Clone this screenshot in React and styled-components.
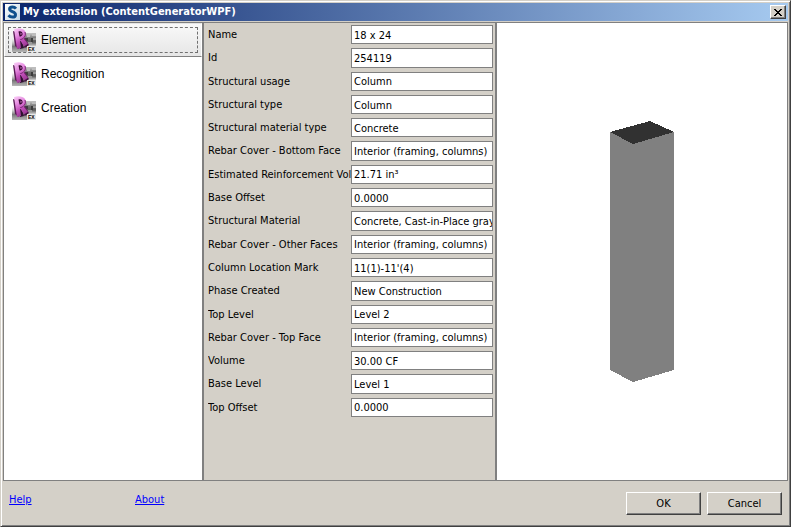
import React, { useState } from "react";
import styled, { createGlobalStyle } from "styled-components";

const GlobalStyle = createGlobalStyle`
    * {
        box-sizing: border-box;
    }

    body {
        margin: 0;
        background: #d4d0c8;
        color: #000;
        font-family: "DejaVu Sans Condensed", "DejaVu Sans", Tahoma, sans-serif;
        font-size: 11px;
        line-height: 14px;
    }

    button,
    input {
        font: inherit;
        color: inherit;
    }
`;

const Window = styled.div`
    display: flex;
    flex-direction: column;
    min-height: 100vh;
    padding: 2px 2px 1px 2px;
    border: 1px solid;
    border-color: #d4d0c8 #404040 #404040 #d4d0c8;
    background: #d4d0c8;
    box-shadow: inset 1px 1px #fff, inset -1px -1px #808080;
`;

const TitleBar = styled.header`
    display: flex;
    align-items: center;
    gap: 3px;
    height: 18px;
    margin-bottom: 1px;
    padding: 0 2px;
    background: linear-gradient(to right, #0a246a, #a6caf0);
`;

const Title = styled.h1`
    flex: 1;
    margin: 0;
    color: #fff;
    font-size: 11px;
    font-weight: bold;
    line-height: 14px;
    white-space: nowrap;
`;

const RaisedButton = styled.button`
    padding: 0;
    border: 1px solid;
    border-color: #fff #404040 #404040 #fff;
    background: #d4d0c8;
    box-shadow: inset -1px -1px #808080;
`;

const CloseButton = styled(RaisedButton)`
    display: flex;
    align-items: center;
    justify-content: center;
    width: 16px;
    height: 14px;
`;

const DialogButton = styled(RaisedButton)`
    width: 75px;
    height: 23px;
`;

const Body = styled.main`
    display: flex;
    flex: 1;
    border: 1px solid #808080;
`;

const Sidebar = styled.nav`
    flex: 0 0 198px;
    background: #fff;
`;

const NavButton = styled.button`
    display: block;
    width: 100%;
    height: 34px;
    padding: 3px;
    border: 1px solid;
    border-color: ${(props) =>
        props.$active ? "#e4e4e4 #fff #808080 #fff" : "transparent"};
    background: ${(props) =>
        props.$active ? "linear-gradient(#f9f9f9, #e6e6e6)" : "none"};
    font-family: "Liberation Sans", Arial, sans-serif;
    font-size: 12px;
    text-align: left;
`;

const NavContent = styled.span`
    display: flex;
    align-items: center;
    gap: 5px;
    height: 26px;
    padding: 0 3px;
    border: 1px dashed ${(props) => (props.$active ? "#707070" : "transparent")};
`;

const Properties = styled.form`
    display: grid;
    grid-auto-rows: 1fr;
    align-self: flex-start;
    min-height: 396px;
`;

const PropertyPane = styled.section`
    flex: 0 0 295px;
    border: 2px solid #808080;
    border-width: 0 2px;
`;

const PropertyRow = styled.div`
    display: grid;
    grid-template-columns: minmax(0, 1fr) 142px;
    padding: 2px 2px 2px 4px;
`;

const Label = styled.label`
    padding-top: 3px;
    overflow: hidden;
    white-space: nowrap;
`;

const Value = styled.input`
    width: 100%;
    min-width: 0;
    height: 100%;
    padding: 1px 0 0 2px;
    border: 1px solid #808080;
    border-radius: 0;
    background: #fff;
`;

const Viewport = styled.section`
    display: flex;
    flex: 1;
    align-items: center;
    justify-content: center;
    background: #fff;
`;

const Footer = styled.footer`
    display: flex;
    justify-content: space-between;
    padding: 11px 6px 10px 6px;
`;

const Links = styled.div`
    display: grid;
    grid-template-columns: 126px auto;
    align-items: start;
`;

const Link = styled.a`
    justify-self: start;
    color: #0000ff;
    line-height: 16px;
`;

const Buttons = styled.div`
    display: flex;
    gap: 6px;
`;

const sections = ["Element", "Recognition", "Creation"];

const properties = [
    { name: "Name", value: "18 x 24" },
    { name: "Id", value: "254119" },
    { name: "Structural usage", value: "Column" },
    { name: "Structural type", value: "Column" },
    { name: "Structural material type", value: "Concrete" },
    { name: "Rebar Cover - Bottom Face", value: "Interior (framing, columns)" },
    { name: "Estimated Reinforcement Vol", value: "21.71 in³" },
    { name: "Base Offset", value: "0.0000" },
    { name: "Structural Material", value: "Concrete, Cast-in-Place gray" },
    { name: "Rebar Cover - Other Faces", value: "Interior (framing, columns)" },
    { name: "Column Location Mark", value: "11(1)-11'(4)" },
    { name: "Phase Created", value: "New Construction" },
    { name: "Top Level", value: "Level 2" },
    { name: "Rebar Cover - Top Face", value: "Interior (framing, columns)" },
    { name: "Volume", value: "30.00 CF" },
    { name: "Base Level", value: "Level 1" },
    { name: "Top Offset", value: "0.0000" },
];

const AppLogo = () => (
    <svg width="15" height="16" viewBox="0 0 15 16" aria-hidden="true">
        <defs>
            <linearGradient id="logo-bg" x1="0" y1="0" x2="1" y2="1">
                <stop offset="0" stopColor="#ffffff" />
                <stop offset="1" stopColor="#c3d6e4" />
            </linearGradient>
        </defs>
        <rect width="15" height="16" fill="url(#logo-bg)" />
        <path
            d="M11 4.600C10 3.400 8.800 2.900 7.500 2.900C5.600 2.900 4.600 3.800 4.600 5.100C4.600 8.200 10.500 7.200 10.500 10.700C10.500 12.300 9.300 13.100 7.400 13.100C5.800 13.100 4.500 12.500 3.500 11.300"
            fill="none"
            stroke="#0f4f8c"
            strokeWidth="3"
        />
    </svg>
);

const SectionIcon = ({ id }) => (
    <svg width="24" height="24" viewBox="0 0 24 24" aria-hidden="true">
        <defs>
            <linearGradient id={`${id}-photo`} x1="0" y1="0" x2="0" y2="1">
                <stop offset="0" stopColor="#c8c8c8" />
                <stop offset="0.45" stopColor="#6a6a6a" />
                <stop offset="0.7" stopColor="#5a5a5a" />
                <stop offset="1" stopColor="#d0d0d0" />
            </linearGradient>
            <linearGradient id={`${id}-face`} x1="0" y1="0" x2="0.4" y2="1">
                <stop offset="0" stopColor="#fbd0f8" />
                <stop offset="0.4" stopColor="#e58ae0" />
                <stop offset="0.7" stopColor="#c24fba" />
                <stop offset="1" stopColor="#9c3a94" />
            </linearGradient>
            <linearGradient id={`${id}-fade`} x1="0" y1="0" x2="0" y2="1">
                <stop offset="0" stopColor="#d8d8d8" stopOpacity="0" />
                <stop offset="0.6" stopColor="#777777" />
                <stop offset="1" stopColor="#b8b8b8" />
            </linearGradient>
        </defs>
        <rect y="10" width="16" height="14" fill={`url(#${id}-fade)`} />
        <rect x="12" y="5" width="12" height="13" fill={`url(#${id}-photo)`} />
        <path d="M15 6h3v3h-3zM20 5h4v3h-4z" fill="#bdbdbd" />
        <path d="M13 10h3v3h-3zM19 10h2v4h-2z" fill="#3c3c3c" />
        <path d="M21 10h3v2h-3zM16 14h4v2h-4z" fill="#999999" />
        <path d="M1 3L4 4L7 21L3 18Z" fill="#5b1b56" />
        <path d="M7 13L10 13L12 20L8 21Z" fill="#2f1030" />
        <path d="M10 12L13 10L17 17L12 18Z" fill="#6a2064" />
        <path
            d="M2 1C6 -0.500 11 0 13 3C14.500 6 14 8.500 11.500 10.500L16 16L12 18.500L8 12L9 20L5 21Z"
            fill={`url(#${id}-face)`}
        />
        <path d="M13 4C14 7 13 9 11 10.500L8 12" fill="none" stroke="#7c2876" strokeWidth="1" />
        <path d="M6.500 3.500C9 2.500 11 4.500 10.500 6.500C10 8.200 8.500 8.600 7.500 8.500Z" fill="#35082f" />
        <path d="M8.500 4.500L10 6L8.500 7Z" fill="#d67bcd" />
        <path d="M12 18.500L16 16L16.500 18L12.500 20Z" fill="#451042" />
        <rect x="15" y="18" width="9" height="6" fill="#e8e8e8" />
        <text
            x="16"
            y="23"
            fontFamily="Liberation Sans, Arial, sans-serif"
            fontSize="5"
            fontWeight="bold"
            fill="#000"
        >
            EX
        </text>
    </svg>
);

const CloseIcon = () => (
    <svg width="8" height="7" viewBox="0 0 8 7" shapeRendering="crispEdges" aria-hidden="true">
        <path
            d="M0 0h2v1h1v1h2v-1h1v-1h2v1h-1v1h-1v1h-1v1h1v1h1v1h1v1h-2v-1h-1v-1h-2v1h-1v1h-2v-1h1v-1h1v-1h1v-1h-1v-1h-1v-1h-1z"
            fill="#000"
        />
    </svg>
);

const ColumnModel = () => (
    <svg
        width="64"
        height="261"
        viewBox="0 0 64 261"
        shapeRendering="crispEdges"
        role="img"
        aria-label="Column"
    >
        <path d="M0 11H64V249L23 261L0 249Z" fill="#808080" />
        <path d="M0 11L40 0L64 11L23 23Z" fill="#313131" />
    </svg>
);

const App = () => {
    const [active, setActive] = useState("Element");

    return (
        <Window>
            <GlobalStyle />
            <TitleBar>
                <AppLogo />
                <Title>My extension (ContentGeneratorWPF)</Title>
                <CloseButton type="button" aria-label="Close">
                    <CloseIcon />
                </CloseButton>
            </TitleBar>
            <Body>
                <Sidebar>
                    {sections.map((item) => (
                        <NavButton
                            key={item}
                            type="button"
                            $active={item === active}
                            onClick={() => setActive(item)}
                        >
                            <NavContent $active={item === active}>
                                <SectionIcon id={item} />
                                {item}
                            </NavContent>
                        </NavButton>
                    ))}
                </Sidebar>
                <PropertyPane>
                    <Properties>
                        {properties.map((item, i) => (
                            <PropertyRow key={item.name}>
                                <Label htmlFor={`property-${i}`}>{item.name}</Label>
                                <Value id={`property-${i}`} defaultValue={item.value} />
                            </PropertyRow>
                        ))}
                    </Properties>
                </PropertyPane>
                <Viewport>
                    <ColumnModel />
                </Viewport>
            </Body>
            <Footer>
                <Links>
                    <Link href="#help">Help</Link>
                    <Link href="#about">About</Link>
                </Links>
                <Buttons>
                    <DialogButton type="button">OK</DialogButton>
                    <DialogButton type="button">Cancel</DialogButton>
                </Buttons>
            </Footer>
        </Window>
    );
};

export default App;
